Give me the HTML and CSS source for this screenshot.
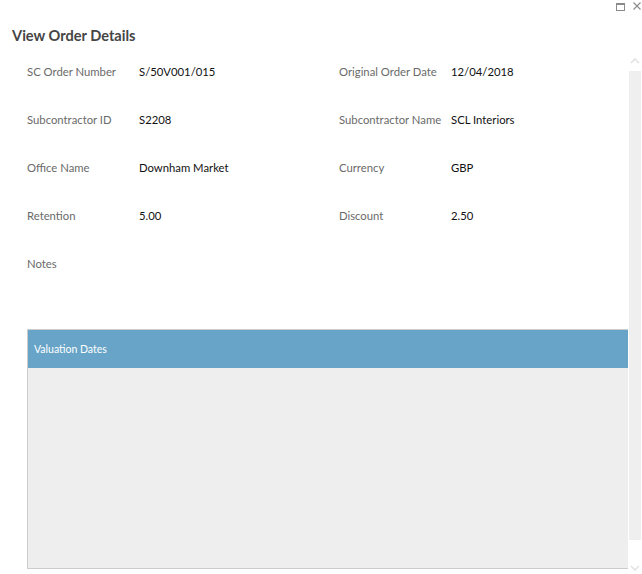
FILE: index.html
```html
<!DOCTYPE html>
<html lang="en">
<head>
<meta charset="utf-8">
<title>View Order Details</title>
<link rel="stylesheet" href="styles.css">
</head>
<body>
<div class="dialog">
  <div class="window-bar">
    <span class="win-btn win-max" title="Maximize"></span>
    <span class="win-btn win-close" title="Close">
      <svg width="8" height="8" viewBox="0 0 8 8"><path d="M0.5 0.5 L7.5 7.5 M7.5 0.5 L0.5 7.5" stroke="#8a8a8a" stroke-width="1.1" fill="none"/></svg>
    </span>
  </div>
  <h1 class="title">View Order Details</h1>
  <div class="body">
    <div class="content">
      <div class="fields">
        <div class="field"><span class="label">SC Order Number</span><span class="value">S/50V001/015</span></div>
        <div class="field"><span class="label">Original Order Date</span><span class="value">12/04/2018</span></div>
        <div class="field"><span class="label">Subcontractor ID</span><span class="value">S2208</span></div>
        <div class="field"><span class="label">Subcontractor Name</span><span class="value">SCL Interiors</span></div>
        <div class="field"><span class="label">Office Name</span><span class="value">Downham Market</span></div>
        <div class="field"><span class="label">Currency</span><span class="value">GBP</span></div>
        <div class="field"><span class="label">Retention</span><span class="value">5.00</span></div>
        <div class="field"><span class="label">Discount</span><span class="value">2.50</span></div>
        <div class="field"><span class="label">Notes</span><span class="value"></span></div>
      </div>
      <div class="panel">
        <div class="panel-header">Valuation Dates</div>
        <div class="panel-body"></div>
      </div>
    </div>
    <div class="scrollbar">
      <svg class="chev" width="10" height="6" viewBox="0 0 10 6"><path d="M1 5 L5 1 L9 5" stroke="#e2e2e2" stroke-width="1.6" fill="none"/></svg>
      <div class="thumb"></div>
      <svg class="chev chev-down" width="10" height="6" viewBox="0 0 10 6"><path d="M1 1 L5 5 L9 1" stroke="#e2e2e2" stroke-width="1.6" fill="none"/></svg>
    </div>
  </div>
</div>
</body>
</html>
```
FILE: styles.css
```css
html, body {
  margin: 0;
  padding: 0;
  background: #ffffff;
}
body {
  font-family: Lato, "Open Sans", "Liberation Sans", sans-serif;
  color: #000;
}
.dialog {
  width: 642px;
  height: 574px;
  overflow: hidden;
  display: flex;
  flex-direction: column;
}
.window-bar {
  height: 14px;
  display: flex;
  justify-content: flex-end;
  align-items: flex-start;
  gap: 8px;
  padding: 2px 1px 0 0;
  box-sizing: border-box;
}
.win-btn {
  display: block;
  width: 8px;
  height: 8px;
}
.win-max {
  margin-top: 1px;
  width: 7px;
  height: 5px;
  border: 1px solid #8a8a8a;
  border-top-width: 2px;
}
.win-close svg {
  display: block;
}
.title {
  margin: 12px 0 0 12px;
  font-size: 14.6px;
  line-height: 20px;
  font-weight: 700;
  color: #454545;
}
.body {
  flex: 1;
  display: flex;
  min-height: 0;
}
.content {
  flex: 1;
  padding: 17px 1px 0 27px;
  display: flex;
  flex-direction: column;
  min-width: 0;
}
.fields {
  display: grid;
  grid-template-columns: 312px 1fr;
  grid-auto-rows: 48px;
}
.field {
  display: flex;
  font-size: 11.3px;
  line-height: 18px;
}
.label {
  width: 112px;
  color: #6a6a6a;
}
.value {
  color: #111;
}
.panel {
  margin-top: 26px;
  border: 1px solid #cccccc;
  border-right: none;
  display: flex;
  flex-direction: column;
}
.panel-header {
  height: 38px;
  background: #67a4c7;
  color: #ffffff;
  font-size: 10.5px;
  line-height: 38px;
  padding-left: 6px;
}
.panel-body {
  height: 200px;
  background: #eeeeee;
}
.scrollbar {
  width: 12px;
  margin-right: 1px;
  display: flex;
  flex-direction: column;
  align-items: center;
  padding-top: 12px;
}
.chev {
  display: block;
}
.thumb {
  margin-top: 7px;
  width: 12px;
  height: 469px;
  background: #efefef;
}
.chev-down {
  margin-top: 25px;
}
```
